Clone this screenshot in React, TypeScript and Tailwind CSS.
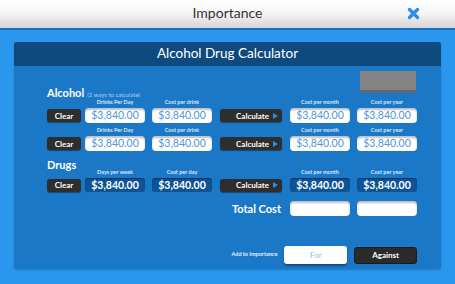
import React from "react";

const FONT = { fontFamily: "Lato, 'Open Sans', sans-serif" };

function Label({ children, w }: { children: React.ReactNode; w: string }) {
  return (
    <div className={`${w} text-center text-[5.5px] leading-[7px] font-bold text-[#d6e8f8]`}>{children}</div>
  );
}

function WhiteInput({ value }: { value?: string }) {
  return (
    <div className="w-[60px] h-[15px] rounded-[4px] bg-white shadow-[inset_0_2px_2px_rgba(0,0,0,0.25)] flex items-center justify-center text-[10.5px] leading-none text-[#4f97d6]">
      {value}
    </div>
  );
}

function DarkInput({ value }: { value: string }) {
  return (
    <div className="w-[60px] h-[14px] rounded-[3px] bg-[#0e5396] shadow-[inset_0_1px_1px_rgba(0,0,0,0.35)] flex items-center justify-center text-[10.5px] leading-none font-bold text-white">
      {value}
    </div>
  );
}

function ClearBtn() {
  return (
    <div className="w-[34px] h-[13px] rounded-[3px] bg-[#2e2e2e] shadow-[0_1px_1px_rgba(0,0,0,0.4)] flex items-center justify-center text-[8px] leading-none font-bold text-white">
      Clear
    </div>
  );
}

function CalcBtn() {
  return (
    <div className="w-[62px] h-[13px] rounded-[3px] bg-[#2e2e2e] shadow-[0_1px_1px_rgba(0,0,0,0.4)] flex items-center justify-end pr-[4px] gap-[4px] text-[8px] leading-none font-bold text-white">
      <span>Calculate</span>
      <svg width="5" height="6" viewBox="0 0 5 6"><path d="M0 0 L5 3 L0 6 Z" fill="#2e8fe0" /></svg>
    </div>
  );
}

function LabelRow({ a, b, c, d }: { a: string; b: string; c: string; d: string }) {
  return (
    <div className="flex">
      <div className="w-[38px]" />
      <Label w="w-[60px]">{a}</Label>
      <div className="w-[7px]" />
      <Label w="w-[60px]">{b}</Label>
      <div className="w-[78px]" />
      <Label w="w-[60px]">{c}</Label>
      <div className="w-[7px]" />
      <Label w="w-[60px]">{d}</Label>
    </div>
  );
}

function ControlRow({ dark }: { dark?: boolean }) {
  const v = "$3,840.00";
  const I = dark ? DarkInput : WhiteInput;
  return (
    <div className="flex items-center">
      <ClearBtn />
      <div className="w-[4px]" />
      <I value={v} />
      <div className="w-[7px]" />
      <I value={v} />
      <div className="w-[8px]" />
      <CalcBtn />
      <div className="w-[8px]" />
      <I value={v} />
      <div className="w-[7px]" />
      <I value={v} />
    </div>
  );
}

export default function App() {
  return (
    <div className="w-[455px] h-[284px] bg-[#2a97ef] overflow-hidden" style={FONT}>
      <div className="h-[30px] bg-gradient-to-b from-white via-[#f4f4f4] to-[#d4d4d4] border-b-[2px] border-[#1a6fc0] grid grid-cols-[1fr_auto_1fr] items-center">
        <div />
        <div className="text-[14px] leading-none text-[#333] pb-[2px]">Importance</div>
        <div className="flex justify-end pr-[35px] pb-[2px]">
          <svg width="13" height="13" viewBox="0 0 13 13">
            <path d="M2.5 2.5 L10.5 10.5 M10.5 2.5 L2.5 10.5" stroke="#2b8fe3" strokeWidth="3.4" strokeLinecap="round" />
          </svg>
        </div>
      </div>
      <div className="pt-[12px] px-[14px]">
        <div className="w-[427px] h-[227px] rounded-[3px] bg-[#1b78c7] shadow-[0_1px_2px_rgba(0,0,0,0.2)] overflow-hidden">
          <div className="h-[24px] bg-[#0f4a7f] flex items-center justify-center text-[13.5px] leading-none text-white pb-[1px]">
            Alcohol Drug Calculator
          </div>
          <div className="pl-[33px] pr-[24px]">
            <div className="mt-[5px] flex justify-between items-end">
              <div className="flex items-baseline gap-[3px] text-white">
                <span className="text-[11px] leading-[12px] font-bold">Alcohol</span>
                <span className="text-[6px] text-[#a9cff0]">(2 ways to calculate)</span>
              </div>
              <div className="w-[56px] h-[22px] mb-[6px] mr-[1px] bg-[#838383] border-b-[3px] border-[#5e6a78]" />
            </div>
            <LabelRow a="Drinks Per Day" b="Cost per drink" c="Cost per month" d="Cost per year" />
            <div className="mt-[2px]"><ControlRow /></div>
            <div className="mt-[4px]"><LabelRow a="Drinks Per Day" b="Cost per drink" c="Cost per month" d="Cost per year" /></div>
            <div className="mt-[2px]"><ControlRow /></div>
            <div className="mt-[9px] text-[11px] leading-[10px] font-bold text-white">Drugs</div>
            <div className="-mt-[1px]"><LabelRow a="Days per week" b="Cost per day" c="Cost per month" d="Cost per year" /></div>
            <div className="mt-[2px]"><ControlRow dark /></div>
            <div className="mt-[9px] flex items-center">
              <div className="w-[185px]" />
              <div className="w-[58px] text-[11px] leading-none font-bold text-white">Total Cost</div>
              <WhiteInput />
              <div className="w-[7px]" />
              <WhiteInput />
            </div>
            <div className="mt-[30px] flex items-center">
              <div className="w-[185px]" />
              <div className="w-[53px] text-[5.5px] leading-none font-bold text-[#e4f0fb]">Add to Importance</div>
              <div className="w-[63px] h-[18px] rounded-[3px] bg-white shadow-[0_2px_2px_rgba(0,0,0,0.35)] flex items-center justify-center text-[8px] leading-none text-[#8dbbe3]">
                For
              </div>
              <div className="w-[7px]" />
              <div className="w-[63px] h-[17px] rounded-[3px] bg-[#2b2b2b] border border-[#1a1a1a] flex items-center justify-center text-[8px] leading-none font-bold text-white">
                Against
              </div>
            </div>
          </div>
        </div>
      </div>
    </div>
  );
}
